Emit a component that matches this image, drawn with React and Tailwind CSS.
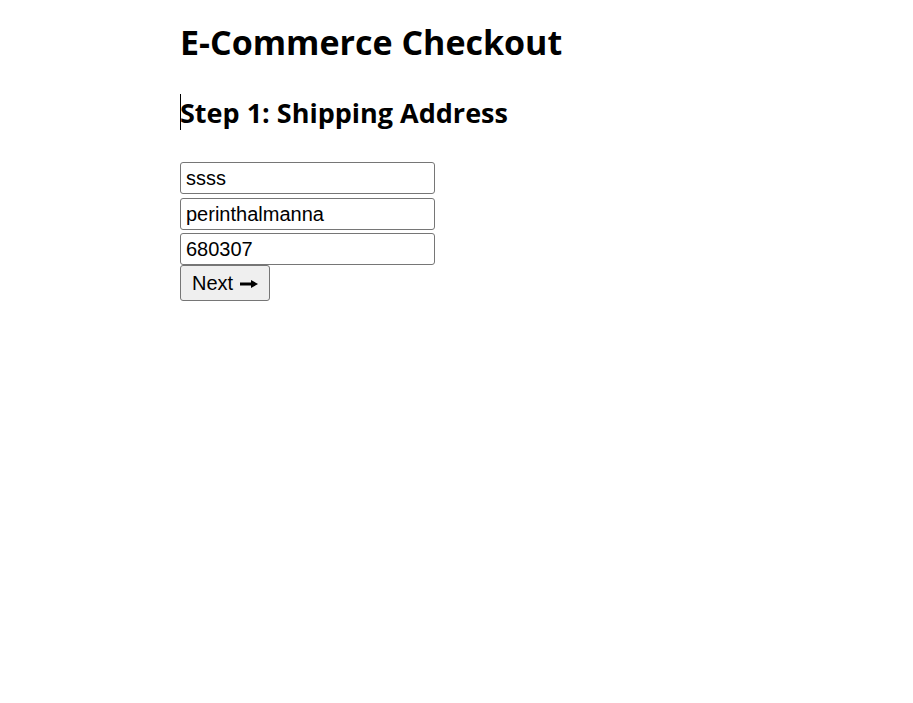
import React, { useState } from 'react';

const App = () => {
  const [form, setForm] = useState({ name: 'ssss', city: 'perinthalmanna', pin: '680307' });

  const handleChange = (e) => {
    const { name, value } = e.target;
    setForm((prev) => ({ ...prev, [name]: value }));
  };

  const inputClass =
    'block w-[255px] h-[32px] border border-[#767676] rounded-[3px] px-[5px] text-[20px] text-black bg-white focus:outline-none';

  return (
    <div className="min-h-screen bg-white pl-[180px] pt-[20px]" style={{ fontFamily: '"Liberation Sans", Arial, sans-serif' }}>
      <h1 className="text-[34px] font-bold leading-[44px] text-black" style={{ fontFamily: '"Open Sans", "Noto Sans", sans-serif' }}>
        E-Commerce Checkout
      </h1>
      <div className="relative mt-[32px]">
        <span className="absolute left-0 top-[-2px] w-px h-[36px] bg-black" />
        <h2 className="text-[27px] font-bold leading-[34px] text-black" style={{ fontFamily: '"Open Sans", "Noto Sans", sans-serif' }}>
          Step 1: Shipping Address
        </h2>
      </div>
      <form className="mt-[32px] flex flex-col" onSubmit={(e) => e.preventDefault()}>
        <input name="name" value={form.name} onChange={handleChange} className={inputClass} />
        <input name="city" value={form.city} onChange={handleChange} className={`${inputClass} mt-[4px]`} />
        <input name="pin" value={form.pin} onChange={handleChange} className={`${inputClass} mt-[3px]`} />
        <button
          type="submit"
          className="w-[90px] h-[36px] border border-[#767676] rounded-[3px] bg-[#efefef] text-[20px] text-black flex items-center pl-[11px] gap-[7px]"
        >
          <span>Next</span>
          <svg width="18" height="10" viewBox="0 0 18 10" className="mt-[2px]">
            <rect x="0" y="3.5" width="12" height="3" fill="black" />
            <polygon points="11,1 18,5 11,9" fill="black" />
          </svg>
        </button>
      </form>
    </div>
  );
};

export default App;
